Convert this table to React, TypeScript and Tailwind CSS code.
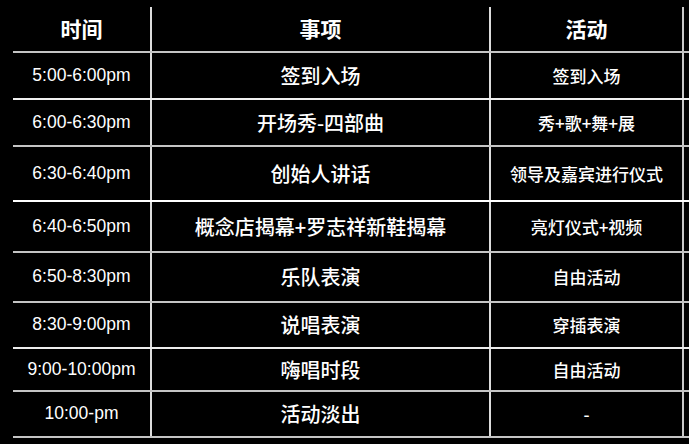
import React from "react";

type Row = { time: string; item: string; act: string; h: string; line: string };

const rows: Row[] = [
  { time: "5:00-6:00pm", item: "签到入场", act: "签到入场", h: "h-[47px]", line: "border-[#f0f0f0]" },
  { time: "6:00-6:30pm", item: "开场秀-四部曲", act: "秀+歌+舞+展", h: "h-[47px]", line: "border-[#c4c4c4]" },
  { time: "6:30-6:40pm", item: "创始人讲话", act: "领导及嘉宾进行仪式", h: "h-[55px]", line: "border-[#ffffff]" },
  { time: "6:40-6:50pm", item: "概念店揭幕+罗志祥新鞋揭幕", act: "亮灯仪式+视频", h: "h-[51px]", line: "border-[#c4c4c4]" },
  { time: "6:50-8:30pm", item: "乐队表演", act: "自由活动", h: "h-[50px]", line: "border-[#c4c4c4]" },
  { time: "8:30-9:00pm", item: "说唱表演", act: "穿插表演", h: "h-[46px]", line: "border-[#ececec]" },
  { time: "9:00-10:00pm", item: "嗨唱时段", act: "自由活动", h: "h-[43px]", line: "border-[#c4c4c4]" },
  { time: "10:00-pm", item: "活动淡出", act: "-", h: "h-[46px]", line: "border-[#c4c4c4]" },
];

const cjk = "font-['Noto_Sans_CJK_SC',sans-serif]";

export default function App() {
  return (
    <div className="w-[689px] h-[444px] bg-black overflow-hidden pt-[7px] pl-[13px] text-white">
      <div className="flex flex-col w-[676px]">
        <div className="flex h-[46px] border-b-2 border-[#c4c4c4]">
          <div className={`w-[137px] flex items-center justify-center text-[21px] font-bold ${cjk}`}>时间</div>
          <div className={`w-[339px] border-l-2 border-[#dcdcdc] flex items-center justify-center text-[21px] font-bold ${cjk}`}>事项</div>
          <div className={`w-[193px] border-l-2 border-[#dcdcdc] flex items-center justify-center text-[21px] font-bold ${cjk}`}>活动</div>
          <div className="flex-1 border-l-2 border-[#c8c8c8]" />
        </div>
        {rows.map((r, i) => (
          <div key={i} className={`flex ${r.h} border-b-2 ${r.line}`}>
            <div className="w-[137px] flex items-center justify-center text-[17.5px] font-['Liberation_Sans',sans-serif] pb-[1px]">
              {r.time}
            </div>
            <div className={`w-[339px] border-l-2 border-[#dcdcdc] flex items-center justify-center text-[20px] font-medium ${cjk}`}>
              {r.item}
            </div>
            <div className={`w-[193px] border-l-2 border-[#dcdcdc] flex items-center justify-center text-[17px] font-medium ${cjk}`}>
              {r.act}
            </div>
            <div className="flex-1 border-l-2 border-[#c8c8c8]" />
          </div>
        ))}
      </div>
    </div>
  );
}
